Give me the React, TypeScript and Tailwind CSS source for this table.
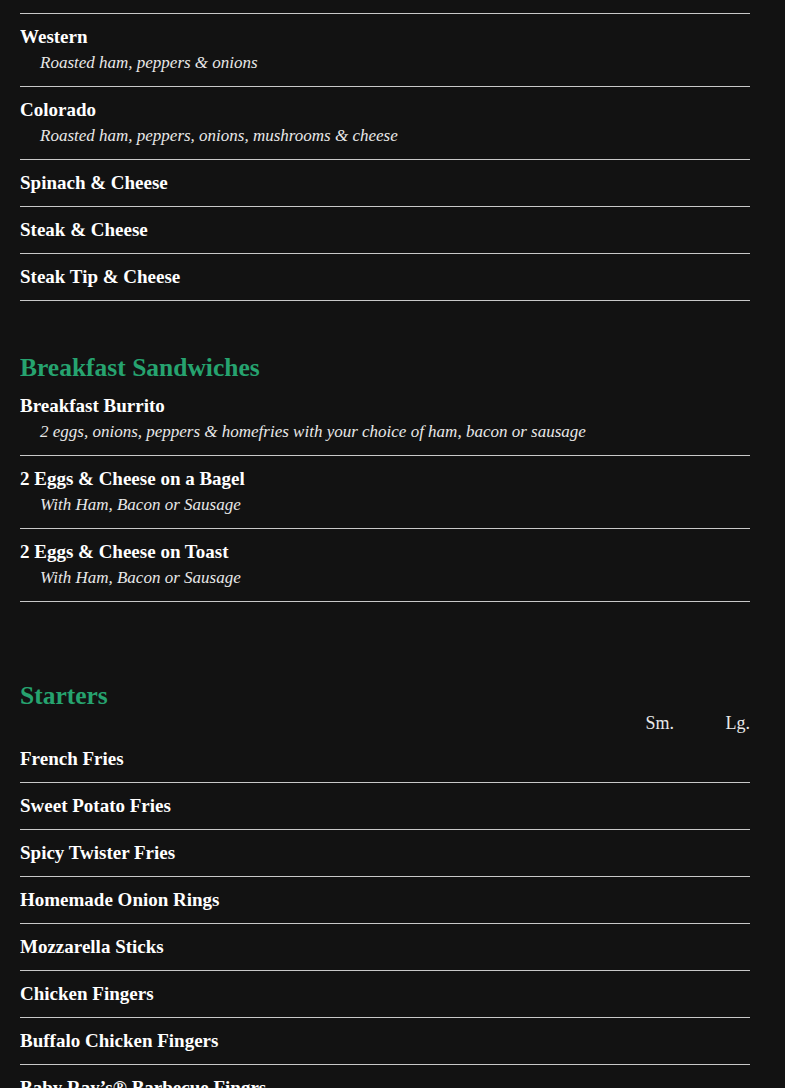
import React from 'react';

type Item = { name: string; desc?: string };

const omelettes: Item[] = [
  { name: 'Western', desc: 'Roasted ham, peppers & onions' },
  { name: 'Colorado', desc: 'Roasted ham, peppers, onions, mushrooms & cheese' },
  { name: 'Spinach & Cheese' },
  { name: 'Steak & Cheese' },
  { name: 'Steak Tip & Cheese' },
];

const sandwiches: Item[] = [
  {
    name: 'Breakfast Burrito',
    desc: '2 eggs, onions, peppers & homefries with your choice of ham, bacon or sausage',
  },
  { name: '2 Eggs & Cheese on a Bagel', desc: 'With Ham, Bacon or Sausage' },
  { name: '2 Eggs & Cheese on Toast', desc: 'With Ham, Bacon or Sausage' },
];

const starters: Item[] = [
  { name: 'French Fries' },
  { name: 'Sweet Potato Fries' },
  { name: 'Spicy Twister Fries' },
  { name: 'Homemade Onion Rings' },
  { name: 'Mozzarella Sticks' },
  { name: 'Chicken Fingers' },
  { name: 'Buffalo Chicken Fingers' },
  { name: 'Baby Ray’s® Barbecue Fingrs' },
];

const MenuRow = ({ item }: { item: Item }) => (
  <div className="border-b border-[#c8c8c8] pt-[12px] pb-[12px]">
    <div className="text-[19px] leading-[22px] font-bold text-white">{item.name}</div>
    {item.desc && (
      <div className="pl-5 pt-[3px] text-[17px] leading-[23px] italic text-[#e8e8e8]">
        {item.desc}
      </div>
    )}
  </div>
);

const SectionTitle = ({ children }: { children: React.ReactNode }) => (
  <h2 className="text-[25.5px] leading-[30px] font-bold text-[#26a36f]">{children}</h2>
);

export default function App() {
  return (
    <div
      className="min-h-screen bg-[#121212] px-5 overflow-hidden"
      style={{ fontFamily: '"Liberation Serif", "DejaVu Serif", serif' }}
    >
      <div className="w-[730px] h-[1088px] overflow-hidden">
        <div className="h-[14px] border-b border-[#c8c8c8]" />
        {omelettes.map((item) => (
          <MenuRow key={item.name} item={item} />
        ))}

        <div className="mt-[52px]">
          <SectionTitle>Breakfast Sandwiches</SectionTitle>
          {sandwiches.map((item) => (
            <MenuRow key={item.name} item={item} />
          ))}
        </div>

        <div className="mt-[79px]">
          <SectionTitle>Starters</SectionTitle>
          <div className="flex justify-end text-[18px] leading-[25px] text-[#e8e8e8]">
            <span className="w-[80px] text-right">Sm.</span>
            <span className="w-[76px] text-right">Lg.</span>
          </div>
          {starters.map((item) => (
            <MenuRow key={item.name} item={item} />
          ))}
        </div>
      </div>
    </div>
  );
}
